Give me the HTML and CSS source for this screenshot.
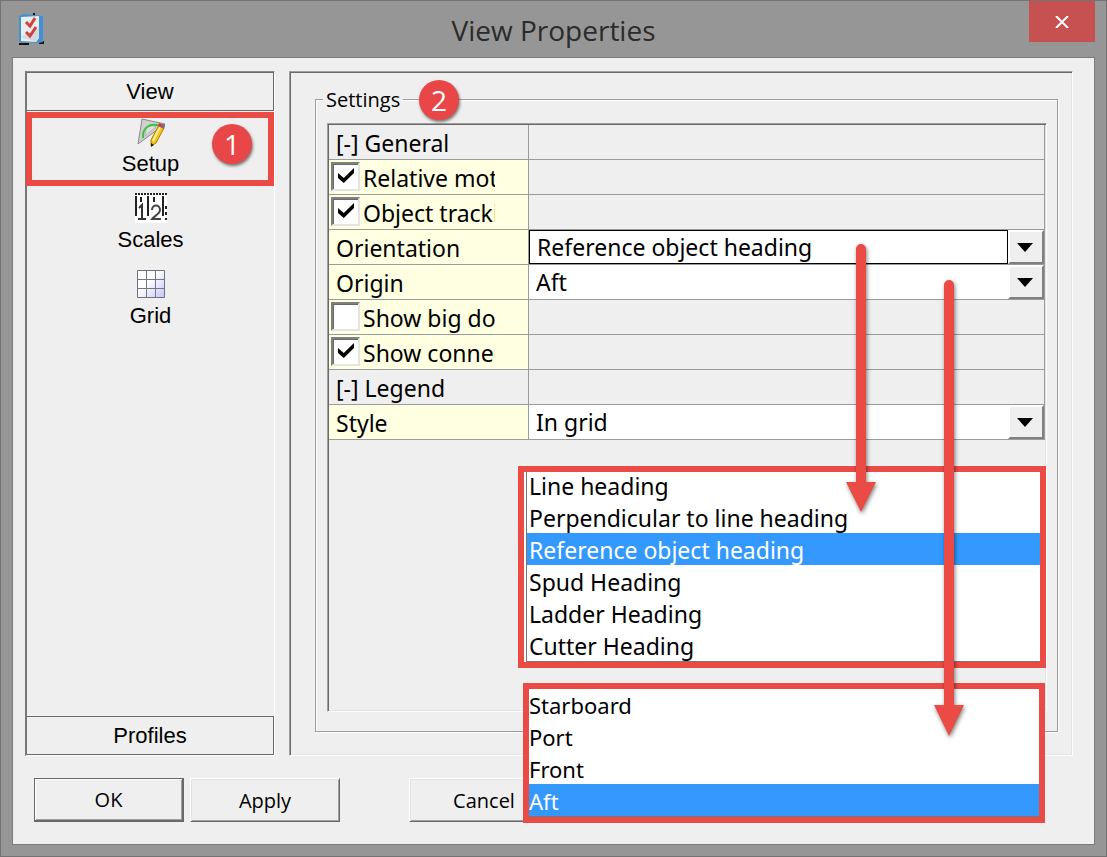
FILE: index.html
```html
<!DOCTYPE html>
<html lang="en">
<head>
    <meta charset="UTF-8">
    <meta name="viewport" content="width=device-width, initial-scale=1.0">
    <title>View Properties</title>
    <link rel="stylesheet" href="styles.css">
</head>
<body>
    <div class="dialog">
        <header class="titlebar">
            <div class="app-icon">
                <svg width="28" height="34" viewBox="0 0 28 34">
                    <path d="M2 30h10v2H2zM22 28h5v3h-5zM16 0h2v4h-2z" fill="#111"/>
                    <path d="M2 3l5-2 19 2v26l-4 1-20-1z" fill="#3f93d3"/>
                    <path d="M4 4l18-1v22l-3 4-15-1z" fill="#e9edf0"/>
                    <path d="M4 24l15 5 3-4V15z" fill="#d3d9de"/>
                    <path d="M9 9l4 4 5-8M9 19l4 4 6-9" fill="none" stroke="#d0433c" stroke-width="3"/>
                </svg>
            </div>
            <h1>View Properties</h1>
            <button class="close" aria-label="Close">
                <svg width="14" height="12" viewBox="0 0 14 12"><path d="M1 0l12 12M13 0L1 12" stroke="#fff" stroke-width="2"/></svg>
            </button>
        </header>

        <main class="client">
            <div class="panes">
                <nav class="sidebar">
                    <button class="category">View</button>
                    <div class="items">
                        <button class="item item-selected">
                            <svg width="32" height="32" viewBox="0 0 32 32">
                                <path d="M7 3l23 5L3 28z" fill="#cfcfcf" stroke="#8b8b8b"/>
                                <path d="M11 12c3-3 8-3 10-1L10 20z" fill="#dedede" stroke="#b6b6b6"/>
                                <path d="M8 22C7 12 15 6 25 10" fill="none" stroke="#35c43a" stroke-width="2"/>
                                <path d="M24 9l5 3-8 15-5 3v-6z" fill="#f6c51c" stroke="#a77b10"/>
                                <path d="M25 11l-7 14" stroke="#fff08a" stroke-width="2"/>
                                <path d="M24 7l6 2-1 4-6-3z" fill="#df3a30"/>
                                <path d="M27 8l3 1-1 3-3-1z" fill="#5c74a8"/>
                                <path d="M16 27l3 2-3 2z" fill="#222"/>
                            </svg>
                            <span>Setup</span>
                            <span class="badge badge-item">1</span>
                        </button>
                        <button class="item">
                            <svg width="32" height="32" viewBox="0 0 32 32">
                                <path d="M0 1h32v30H0z" fill="#fff"/>
                                <path d="M0 2h32" stroke="#222" stroke-width="2" stroke-dasharray="2 1"/>
                                <path d="M1 4v20M6 5v5M13 4v20M19 5v5M28 4v20" stroke="#222" stroke-width="2"/>
                                <path d="M4 16l3-3v14M3 27h8" fill="none" stroke="#333" stroke-width="2"/>
                                <path d="M17 18c0-6 8-6 8 0 0 4-6 6-8 9h9" fill="none" stroke="#444" stroke-width="2"/>
                                <path d="M31 14v3M31 20v3M31 26v2" stroke="#222" stroke-width="2"/>
                            </svg>
                            <span>Scales</span>
                        </button>
                        <button class="item">
                            <svg width="32" height="32" viewBox="0 0 32 32">
                                <defs>
                                    <linearGradient id="cells" x1="0" y1="0" x2="1" y2="1">
                                        <stop offset="0.4" stop-color="#fff"/>
                                        <stop offset="1" stop-color="#c4c4f7"/>
                                    </linearGradient>
                                </defs>
                                <path d="M2.500 2.500h27v27h-27z" fill="url(#cells)" stroke="#71717d"/>
                                <path d="M11.500 3v26M20.500 3v26M3 11.500h26M3 20.500h26" stroke="#777784"/>
                            </svg>
                            <span>Grid</span>
                        </button>
                    </div>
                    <button class="category">Profiles</button>
                </nav>

                <section class="page">
                    <fieldset class="settings">
                        <legend>Settings</legend>
                        <span class="badge badge-settings">2</span>
                        <div class="property-box">
                            <table class="properties">
                                <tr class="group">
                                    <th><button class="toggle">[-] General</button></th>
                                    <td></td>
                                </tr>
                                <tr>
                                    <th><label class="check"><input type="checkbox" checked><span>Relative motion</span></label></th>
                                    <td></td>
                                </tr>
                                <tr>
                                    <th><label class="check"><input type="checkbox" checked><span>Object tracking</span></label></th>
                                    <td></td>
                                </tr>
                                <tr>
                                    <th><label class="name" for="orientation">Orientation</label></th>
                                    <td>
                                        <div class="combo combo-active">
                                            <select id="orientation">
                                                <option>Reference object heading</option>
                                            </select>
                                            <button class="drop" aria-label="Open orientation"></button>
                                        </div>
                                    </td>
                                </tr>
                                <tr>
                                    <th><label class="name" for="origin">Origin</label></th>
                                    <td>
                                        <div class="combo">
                                            <select id="origin">
                                                <option>Aft</option>
                                            </select>
                                            <button class="drop" aria-label="Open origin"></button>
                                        </div>
                                    </td>
                                </tr>
                                <tr>
                                    <th><label class="check"><input type="checkbox"><span>Show big dots</span></label></th>
                                    <td></td>
                                </tr>
                                <tr>
                                    <th><label class="check"><input type="checkbox" checked><span>Show connection</span></label></th>
                                    <td></td>
                                </tr>
                                <tr class="group">
                                    <th><button class="toggle">[-] Legend</button></th>
                                    <td></td>
                                </tr>
                                <tr>
                                    <th><label class="name" for="style">Style</label></th>
                                    <td>
                                        <div class="combo">
                                            <select id="style">
                                                <option>In grid</option>
                                            </select>
                                            <button class="drop" aria-label="Open style"></button>
                                        </div>
                                    </td>
                                </tr>
                            </table>
                        </div>
                    </fieldset>
                </section>
            </div>

            <footer class="buttons">
                <button class="btn btn-default">OK</button>
                <button class="btn">Apply</button>
                <button class="btn btn-cancel">Cancel</button>
            </footer>
        </main>

        <!-- Opened lists for the two combo boxes -->
        <div class="popup popup-orientation">
            <ul role="listbox" aria-label="Orientation">
                <li role="option">Line heading</li>
                <li role="option">Perpendicular to line heading</li>
                <li role="option" aria-selected="true" class="selected">Reference object heading</li>
                <li role="option">Spud Heading</li>
                <li role="option">Ladder Heading</li>
                <li role="option">Cutter Heading</li>
            </ul>
        </div>
        <div class="popup popup-origin">
            <ul role="listbox" aria-label="Origin">
                <li role="option">Starboard</li>
                <li role="option">Port</li>
                <li role="option">Front</li>
                <li role="option" aria-selected="true" class="selected">Aft</li>
            </ul>
        </div>

        <svg class="arrow arrow-orientation" width="30" height="268" viewBox="0 0 30 268">
            <path d="M10 5a5 5 0 0 1 10 0v233h10l-15 30L0 238h10z"/>
        </svg>
        <svg class="arrow arrow-origin" width="30" height="456" viewBox="0 0 30 456">
            <path d="M10 5a5 5 0 0 1 10 0v420h10l-15 31L0 425h10z"/>
        </svg>
    </div>
</body>
</html>
```
FILE: styles.css
```css
* { margin: 0; padding: 0; box-sizing: border-box; }
body {
    font-family: 'Noto Sans', sans-serif;
    font-size: 22px;
    color: #000;
}
button, select {
    font: inherit;
    color: inherit;
    background: none;
    border: none;
    border-radius: 0;
}
.dialog {
    position: relative;
    display: flex;
    flex-direction: column;
    min-height: 100vh;
    padding: 0 11px 11px;
    background: #969696;
    border: 1px solid #737373;
}

/* Title bar */
.titlebar {
    display: flex;
    align-items: flex-start;
    height: 56px;
}
.app-icon { width: 66px; padding: 12px 5px; }
.app-icon svg { display: block; }
.titlebar h1 {
    flex: 1;
    font-family: 'Open Sans', sans-serif;
    font-size: 28px;
    font-weight: normal;
    line-height: 58px;
    text-align: center;
    color: #2b2b2b;
}
.close {
    display: flex;
    align-items: center;
    justify-content: center;
    width: 66px;
    height: 41px;
    background: #c75050;
}

.client {
    flex: 1;
    display: flex;
    flex-direction: column;
    padding: 13px 21px 22px 12px;
    background: #efefef;
    border: 1px solid #7b7b7b;
}
.panes {
    flex: 1;
    display: grid;
    grid-template-columns: 250px 1fr;
    gap: 14px;
}

/* Sidebar */
.sidebar {
    display: flex;
    flex-direction: column;
    font-family: 'Liberation Sans', Arial, sans-serif;
    border: 2px solid;
    border-color: #8a8a8a #fff #fff #777;
    border-width: 1px 1px 1px 2px;
}
.category {
    height: 39px;
    border: 1px solid #696969;
    border-width: 1px 1px 1px 0;
}
.items { flex: 1; }
.item {
    position: relative;
    display: flex;
    flex-direction: column;
    align-items: center;
    width: 100%;
    height: 76px;
    padding-top: 5px;
}
.item span { line-height: 32px; }
.item-selected::after {
    content: '';
    position: absolute;
    inset: 1px 0 1px -1px;
    border: 6px solid #ea4b45;
}
.item .badge, .badge {
    position: absolute;
    width: 40px;
    height: 40px;
    border-radius: 50%;
    background: #e94747;
    color: #fff;
    font-family: 'Open Sans', sans-serif;
    font-size: 28px;
    line-height: 40px;
    text-align: center;
    box-shadow: 1px 2px 3px rgba(0,0,0,0.5);
}
.item .badge-item { top: 13px; right: 22px; }
.badge-settings { top: -34px; left: 103px; }

/* Settings page */
.page {
    display: flex;
    padding: 12px 14px 23px 25px;
    border: 1px solid;
    border-color: #a0a0a0 #fff #fff #a0a0a0;
    box-shadow: inset 1px 1px 0 #696969, inset -1px -1px 0 #e3e3e3;
}
.settings {
    position: relative;
    flex: 1;
    display: flex;
    flex-direction: column;
    min-width: 0;
    padding: 9px 10px 19px 11px;
    border: 1px solid #9b9b9b;
    box-shadow: 1px 1px 0 #fff, inset 1px 1px 0 #fff;
}
.settings legend {
    margin-left: -4px;
    padding: 1px 3px 0;
    background: #efefef;
    font-family: 'Open Sans', sans-serif;
    font-size: 20px;
    line-height: 29px;
}
.property-box {
    flex: 1;
    padding: 1px;
    border: 1px solid;
    border-color: #a0a0a0 #fff #fff #a0a0a0;
    box-shadow: inset 1px 1px 0 #696969, inset -1px -1px 0 #e3e3e3;
}
.properties {
    width: 100%;
    table-layout: fixed;
    border-spacing: 0;
    border-right: 1px solid #9b9b9b;
}
.properties th, .properties td {
    height: 35px;
    border-bottom: 1px solid #9b9b9b;
    font-size: 23px;
    font-weight: normal;
    text-align: left;
}
.properties th {
    width: 200px;
    background: #ffffe1;
    border-right: 1px solid #9b9b9b;
}
.properties .group th { background: #efefef; }
.toggle, .name {
    display: block;
    height: 34px;
    padding-left: 7px;
    line-height: 36px;
}
.check {
    display: flex;
    gap: 3px;
    width: 166px;
    height: 34px;
    padding-left: 2px;
    line-height: 36px;
    overflow: hidden;
    white-space: nowrap;
}
.check input {
    appearance: none;
    flex: none;
    width: 29px;
    height: 29px;
    margin-top: 2px;
    background: #fff;
    border: 2px solid;
    border-color: #808080 #e4e4e4 #e4e4e4 #808080;
    box-shadow: inset 1px 1px 0 #696969;
}
.check input:checked::before {
    content: '';
    display: block;
    width: 16px;
    height: 15px;
    margin: 4px 0 0 5px;
    background: #000;
    clip-path: polygon(0 34%, 36% 66%, 100% 0, 100% 34%, 36% 100%, 0 66%);
}
.combo {
    display: flex;
    height: 34px;
    background: #fff;
}
.combo select {
    appearance: none;
    flex: 1;
    min-width: 0;
    padding-left: 7px;
}
.combo-active select { border: 1px solid #000; }
.drop {
    display: flex;
    align-items: center;
    justify-content: center;
    width: 36px;
    padding-right: 2px;
    background: #efefef;
    border: 2px solid;
    border-color: #fff #808080 #808080 #fff;
}
.drop::before {
    content: '';
    border: 8px solid transparent;
    border-top: 9px solid #000;
    border-bottom: 0;
}

/* Bottom buttons */
.buttons {
    display: flex;
    gap: 6px;
    padding: 22px 0 0 9px;
    font-family: 'Open Sans', sans-serif;
    font-size: 20px;
}
.btn {
    width: 150px;
    height: 44px;
    border: 1px solid;
    border-color: #fff #696969 #696969 #fff;
    box-shadow: inset 1px 1px 0 #e3e3e3, inset -1px -1px 0 #a0a0a0;
}
.btn-default {
    border-color: #696969;
    border-width: 1px 2px 2px 1px;
    box-shadow: inset 1px 1px 0 #fff, inset -1px -1px 0 #a0a0a0;
}
.btn-cancel { margin-left: 63px; }

/* Opened lists */
.popup {
    position: absolute;
    background: #fff;
    border: 6px solid #ea4b45;
    overflow: hidden;
}
.popup ul { list-style: none; }
.popup li {
    height: 32px;
    line-height: 34px;
    white-space: nowrap;
}
.popup .selected { background: #3399ff; color: #fff; }
.popup-orientation {
    top: 465px;
    left: 517px;
    right: 60px;
    padding-left: 2px;
    font-size: 23px;
}
.popup-orientation ul {
    margin-top: -3px;
    border-left: 1px solid #777;
    border-bottom: 1px solid #777;
}
.popup-orientation li { padding-left: 2px; }
.popup-origin { top: 682px; left: 522px; right: 61px; }
.popup-origin ul { margin-top: -1px; border-bottom: 1px solid #777; }

.arrow {
    position: absolute;
    fill: #ea4b45;
    filter: drop-shadow(1px 2px 2px rgba(0,0,0,0.5));
}
.arrow-orientation { top: 243px; right: 230px; }
.arrow-origin { top: 279px; right: 142px; }
```
